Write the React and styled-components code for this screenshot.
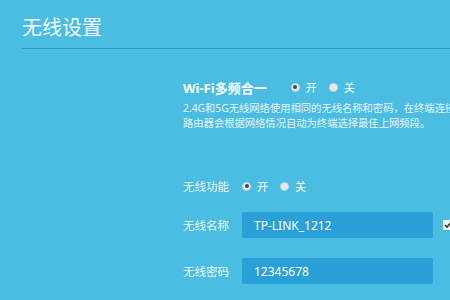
import React from 'react';
import styled, { createGlobalStyle } from 'styled-components';

const GlobalStyle = createGlobalStyle`
  html, body {
    margin: 0;
    padding: 0;
    width: 450px;
    height: 300px;
    overflow: hidden;
    background: #4bbde2;
    font-family: "Noto Sans", "Noto Sans CJK SC", sans-serif;
  }
`;

const Page = styled.div`
  width: 450px;
  height: 300px;
  background: #4bbde2;
  color: #ffffff;
  overflow: hidden;
`;

const Header = styled.div`
  height: 49px;
  box-sizing: border-box;
  margin-left: 22px;
  padding-top: 15px;
  border-bottom: 1px solid #2b9bcb;
`;

const Title = styled.h1`
  margin: 0;
  font-size: 20px;
  line-height: 26px;
  font-weight: 400;
  color: #f4fbfe;
`;

const Content = styled.div`
  padding: 28px 0 0 183px;
  display: flex;
  flex-direction: column;
`;

const Row = styled.div`
  display: flex;
  align-items: center;
  height: ${p => p.h || 20}px;
  margin-top: ${p => p.mt || 0}px;
  white-space: nowrap;
`;

const BigLabel = styled.span`
  font-size: 13px;
  font-weight: 700;
  margin-right: 24px;
  color: #ffffff;
`;

const Label = styled.span`
  width: 59px;
  flex: none;
  font-size: 11.5px;
  color: #eaf7fc;
`;

const Desc = styled.p`
  margin: 4px 0 0;
  width: 267px;
  overflow: hidden;
  font-size: 10.3px;
  line-height: 15px;
  color: #e4f5fb;
  white-space: nowrap;
`;

const Option = styled.label`
  display: flex;
  align-items: center;
  font-size: 11px;
  margin-right: 12px;
  color: #ffffff;
`;

const Dot = styled.span`
  width: 9px;
  height: 9px;
  border-radius: 50%;
  background: #e6e9eb;
  box-sizing: border-box;
  border: 1px solid #c9d3d8;
  margin-right: 6px;
  display: flex;
  align-items: center;
  justify-content: center;

  &::after {
    content: '';
    width: 4px;
    height: 4px;
    border-radius: 50%;
    background: ${p => (p.on ? '#4a4a4a' : 'transparent')};
  }
`;

const Input = styled.div`
  width: 191px;
  height: 26px;
  flex: none;
  box-sizing: border-box;
  background: #2aa0d8;
  border-radius: 2px;
  padding-left: 12px;
  display: flex;
  align-items: center;
  font-size: 12px;
  color: #ffffff;
`;

const Check = styled.span`
  width: 10px;
  height: 10px;
  flex: none;
  margin-left: 10px;
  background: #f2f2f2;
  border-radius: 1px;
  display: flex;
  align-items: center;
  justify-content: center;
`;

const Radio = ({ on, children }) => (
  <Option>
    <Dot on={on} />
    {children}
  </Option>
);

const App = () => {
  return (
    <Page>
      <GlobalStyle />
      <Header>
        <Title>无线设置</Title>
      </Header>
      <Content>
        <Row>
          <BigLabel>Wi-Fi多频合一</BigLabel>
          <Radio on>开</Radio>
          <Radio>关</Radio>
        </Row>
        <Desc>
          2.4G和5G无线网络使用相同的无线名称和密码，在终端连接时，
          <br />
          路由器会根据网络情况自动为终端选择最佳上网频段。
        </Desc>
        <Row mt={45}>
          <Label>无线功能</Label>
          <Radio on>开</Radio>
          <Radio>关</Radio>
        </Row>
        <Row h={26} mt={16}>
          <Label>无线名称</Label>
          <Input>TP-LINK_1212</Input>
          <Check>
            <svg width="8" height="8" viewBox="0 0 8 8">
              <path d="M1 4 L3 6 L7 1.5" stroke="#333" strokeWidth="1.6" fill="none" />
            </svg>
          </Check>
        </Row>
        <Row h={26} mt={20}>
          <Label>无线密码</Label>
          <Input>12345678</Input>
        </Row>
      </Content>
    </Page>
  );
};

export default App;
